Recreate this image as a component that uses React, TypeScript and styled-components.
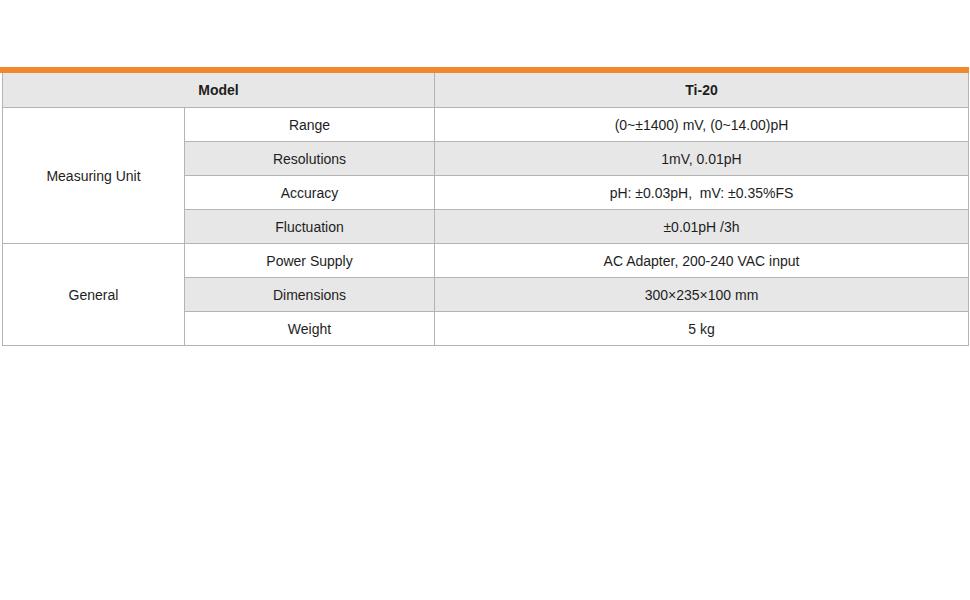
import React from "react";
import styled, { createGlobalStyle } from "styled-components";

const Global = createGlobalStyle`
  html, body { margin: 0; padding: 0; background: #fff; }
  body { font-family: "Liberation Sans", Arial, sans-serif; }
`;

const Page = styled.div`
  padding-top: 67px;
  width: 970px;
`;

const Accent = styled.div`
  height: 6px;
  margin-right: 1px;
  background: #f0882c;
`;

const Table = styled.table`
  border-collapse: collapse;
  margin-left: 2px;
  width: 967px;
  table-layout: fixed;
  font-size: 14px;
  color: #1e1e1e;
`;

const Cell = styled.td<{ $shade?: boolean; $bold?: boolean }>`
  border: 1px solid #b4b4b4;
  height: 33px;
  padding: 0;
  text-align: center;
  vertical-align: middle;
  white-space: pre;
  background: ${(p) => (p.$shade ? "#e7e7e7" : "#ffffff")};
  font-weight: ${(p) => (p.$bold ? 700 : 400)};
`;

const HeadCell = styled(Cell).attrs({ as: "th" })`
  border-top: none;
  height: 34px;
`;

type Group = { name: string; rows: [string, string][] };

const groups: Group[] = [
  {
    name: "Measuring Unit",
    rows: [
      ["Range", "(0~±1400) mV, (0~14.00)pH"],
      ["Resolutions", "1mV, 0.01pH"],
      ["Accuracy", "pH: ±0.03pH,  mV: ±0.35%FS"],
      ["Fluctuation", "±0.01pH /3h"],
    ],
  },
  {
    name: "General",
    rows: [
      ["Power Supply", "AC Adapter, 200-240 VAC input"],
      ["Dimensions", "300×235×100 mm"],
      ["Weight", "5 kg"],
    ],
  },
];

export default function App() {
  return (
    <Page>
      <Global />
      <Accent />
      <Table>
        <colgroup>
          <col style={{ width: 182 }} />
          <col style={{ width: 250 }} />
          <col />
        </colgroup>
        <thead>
          <tr>
            <HeadCell colSpan={2} $shade $bold>
              Model
            </HeadCell>
            <HeadCell $shade $bold>
              Ti-20
            </HeadCell>
          </tr>
        </thead>
        <tbody>
          {groups.map((g) =>
            g.rows.map(([label, value], i) => (
              <tr key={g.name + label}>
                {i === 0 && <Cell rowSpan={g.rows.length}>{g.name}</Cell>}
                <Cell $shade={i % 2 === 1}>{label}</Cell>
                <Cell $shade={i % 2 === 1}>{value}</Cell>
              </tr>
            ))
          )}
        </tbody>
      </Table>
    </Page>
  );
}
